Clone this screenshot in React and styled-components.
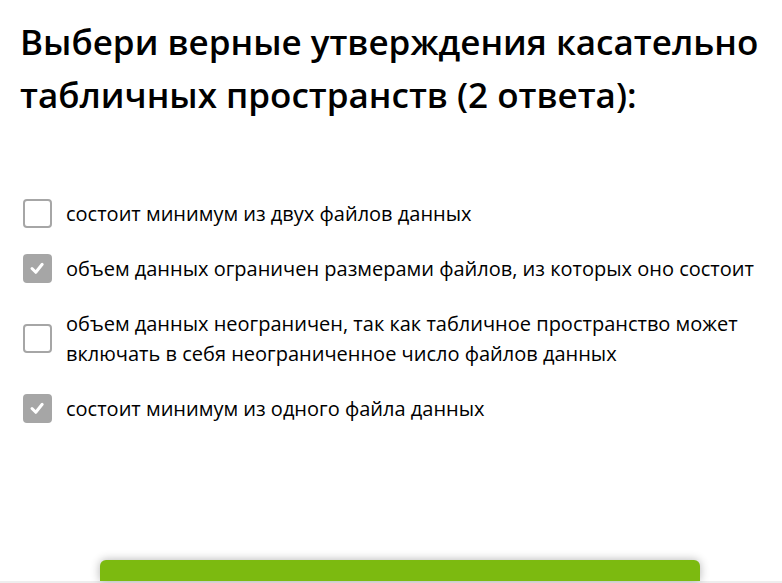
import React from "react";
import styled, { createGlobalStyle } from "styled-components";

const GlobalStyle = createGlobalStyle`
  * { box-sizing: border-box; }
  html, body, #root { height: 100%; }
  body {
    margin: 0;
    background: #fff;
    color: #000;
    font-family: "Open Sans", "Noto Sans", sans-serif;
  }
`;

const Page = styled.main`
  min-height: 100%;
  display: flex;
  flex-direction: column;
  padding-top: 15px;
  overflow: hidden;
`;

const Question = styled.h1`
  margin: 0 20px 78px;
  font-size: 35px;
  line-height: 53px;
  font-weight: 600;
`;

const Answers = styled.fieldset`
  margin: 0;
  padding: 0 23px;
  border: 0;
  min-width: 0;
  display: grid;
  gap: 25px;
`;

const Answer = styled.label`
  display: flex;
  align-items: center;
  gap: 14px;
  font-size: 20px;
  line-height: 30px;
  cursor: pointer;
`;

const Box = styled.span`
  display: grid;
  flex: none;
  width: 29px;
  height: 29px;
  margin-bottom: 1px;

  > * { grid-area: 1 / 1; }

  svg {
    pointer-events: none;
    place-self: center;
  }
`;

const Checkbox = styled.input`
  appearance: none;
  margin: 0;
  width: 100%;
  height: 100%;
  border: 2px solid #a6a6a6;
  border-radius: 4px;
  background: #fff;

  &:checked { background: #a6a6a6; }
  & + svg { visibility: hidden; }
  &:checked + svg { visibility: visible; }
`;

const Footer = styled.footer`
  margin-top: auto;
  padding: 0 82px 0 100px;
  border-bottom: 2px solid #eee;
`;

const Submit = styled.button`
  display: block;
  width: 100%;
  height: 21px;
  border: 0;
  border-radius: 6px 6px 0 0;
  background: #7cba10;
  box-shadow: 0 0 10px rgba(0, 0, 0, 0.3);
`;

const answers = [
  { text: "состоит минимум из двух файлов данных", checked: false },
  { text: "объем данных ограничен размерами файлов, из которых оно состоит", checked: true },
  { text: "объем данных неограничен, так как табличное пространство может включать в себя неограниченное число файлов данных", checked: false },
  { text: "состоит минимум из одного файла данных", checked: true },
];

export default function App() {
  return (
    <>
      <GlobalStyle />
      <Page>
        <Question>Выбери верные утверждения касательно табличных пространств (2 ответа):</Question>
        <Answers aria-label="Варианты ответа">
          {answers.map(({ text, checked }) => (
            <Answer key={text}>
              <Box>
                <Checkbox type="checkbox" defaultChecked={checked} />
                <svg width="17" height="17" viewBox="0 0 17 17" aria-hidden="true">
                  <path d="M3 8.5l3.8 3.8 6.4-8" fill="none" stroke="#fff" strokeWidth="3" strokeLinecap="round" strokeLinejoin="round" />
                </svg>
              </Box>
              <span>{text}</span>
            </Answer>
          ))}
        </Answers>
        <Footer>
          <Submit type="button" aria-label="Ответить" />
        </Footer>
      </Page>
    </>
  );
}
